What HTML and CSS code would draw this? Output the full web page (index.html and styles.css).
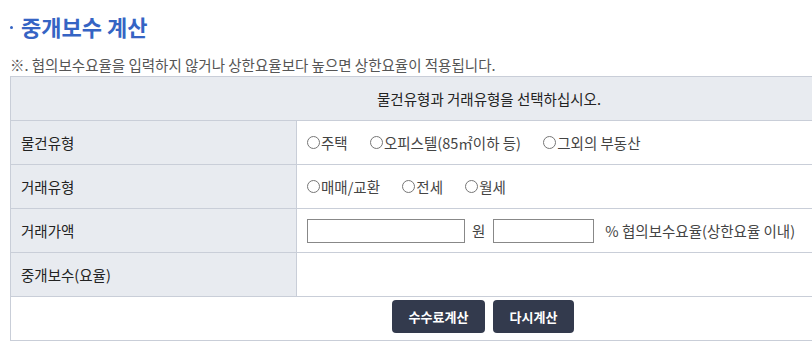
FILE: index.html
```html
<!DOCTYPE html>
<html>
  <head>
    <meta name="viewport" content="width=device-width, initial-scale=1.0" />
    <title>중개보수 계산</title>
    <link rel="stylesheet" href="styles.css">
  </head>

  <body>
    <div class="wrap">
      <!-- 제목 -->
      <h2 class="title"><span class="dot"></span>중개보수 계산</h2>
      <p class="note">※. 협의보수요율을 입력하지 않거나 상한요율보다 높으면 상한요율이 적용됩니다.</p>

      <!-- 계산 표 -->
      <table class="calc">
        <tr>
          <th colspan="2" class="head">물건유형과 거래유형을 선택하십시오.</th>
        </tr>
        <tr>
          <th>물건유형</th>
          <td>
            <label class="opt"><input type="radio" name="kind" />주택</label>
            <label class="opt"><input type="radio" name="kind" />오피스텔(85㎡이하 등)</label>
            <label class="opt"><input type="radio" name="kind" />그외의 부동산</label>
          </td>
        </tr>
        <tr>
          <th>거래유형</th>
          <td>
            <label class="opt"><input type="radio" name="deal" />매매/교환</label>
            <label class="opt"><input type="radio" name="deal" />전세</label>
            <label class="opt"><input type="radio" name="deal" />월세</label>
          </td>
        </tr>
        <tr>
          <th>거래가액</th>
          <td>
            <div class="price">
              <input type="text" class="amount" />
              <span>원</span>
              <input type="text" class="rate" />
              <span class="unit">% 협의보수요율(상한요율 이내)</span>
            </div>
          </td>
        </tr>
        <tr>
          <th>중개보수(요율)</th>
          <td id="result"></td>
        </tr>
        <tr>
          <td colspan="2" class="actions">
            <button type="button" class="btn">수수료계산</button>
            <button type="button" class="btn">다시계산</button>
          </td>
        </tr>
      </table>
    </div>
  </body>
</html>
```

FILE: styles.css
```css
body {
  font-family: "Noto Sans CJK KR", "Noto Sans", sans-serif;
  margin: 0;
  padding: 0;
  background: #ffffff;
  color: #222;
}

.wrap {
  padding: 0 10px;
  overflow: hidden;
}

.title {
  margin: 11px 0 0;
  font-size: 22px;
  line-height: 30px;
  font-weight: bold;
  color: #3564c4;
  display: flex;
  align-items: center;
}

.dot {
  display: inline-block;
  width: 3px;
  height: 3px;
  border-radius: 50%;
  background: #3564c4;
  margin: 3px 8px 0 0;
}

.note {
  margin: 14px 0 1px;
  font-size: 14.5px;
  line-height: 20px;
  color: #555;
}

.calc {
  width: 958px;
  border-collapse: collapse;
  font-size: 14.5px;
}

.calc th,
.calc td {
  border: 1px solid #c9ced8;
  height: 44px;
  padding: 0 10px;
  box-sizing: border-box;
}

.calc th {
  width: 286px;
  background: #e8ebf0;
  font-weight: normal;
  text-align: left;
  color: #222;
}

.calc th.head {
  text-align: center;
}

.calc td {
  color: #444;
}

.opt {
  display: inline-flex;
  align-items: center;
  margin-right: 19px;
}

.opt input {
  width: 13px;
  height: 13px;
  margin: 0 1px 0 0;
}

.price {
  display: flex;
  align-items: center;
}

.price input {
  height: 24px;
  box-sizing: border-box;
  border: 1px solid #888;
  padding: 0 4px;
  margin: 0;
}

.price span {
  margin: 0 8px 0 7px;
}

.amount {
  width: 158px;
}

.rate {
  width: 101px;
}

.price .unit {
  margin-left: 11px;
}

.calc td.actions {
  text-align: center;
  vertical-align: top;
  padding-top: 3px;
  padding-right: 22px;
}

.btn {
  height: 33px;
  padding: 0 17px;
  background-color: #333a4d;
  color: white;
  font-family: inherit;
  font-size: 13px;
  font-weight: bold;
  border: none;
  border-radius: 4px;
  cursor: pointer;
  margin: 0 2px;
}

.btn:hover {
  background-color: #454d63;
}
```
